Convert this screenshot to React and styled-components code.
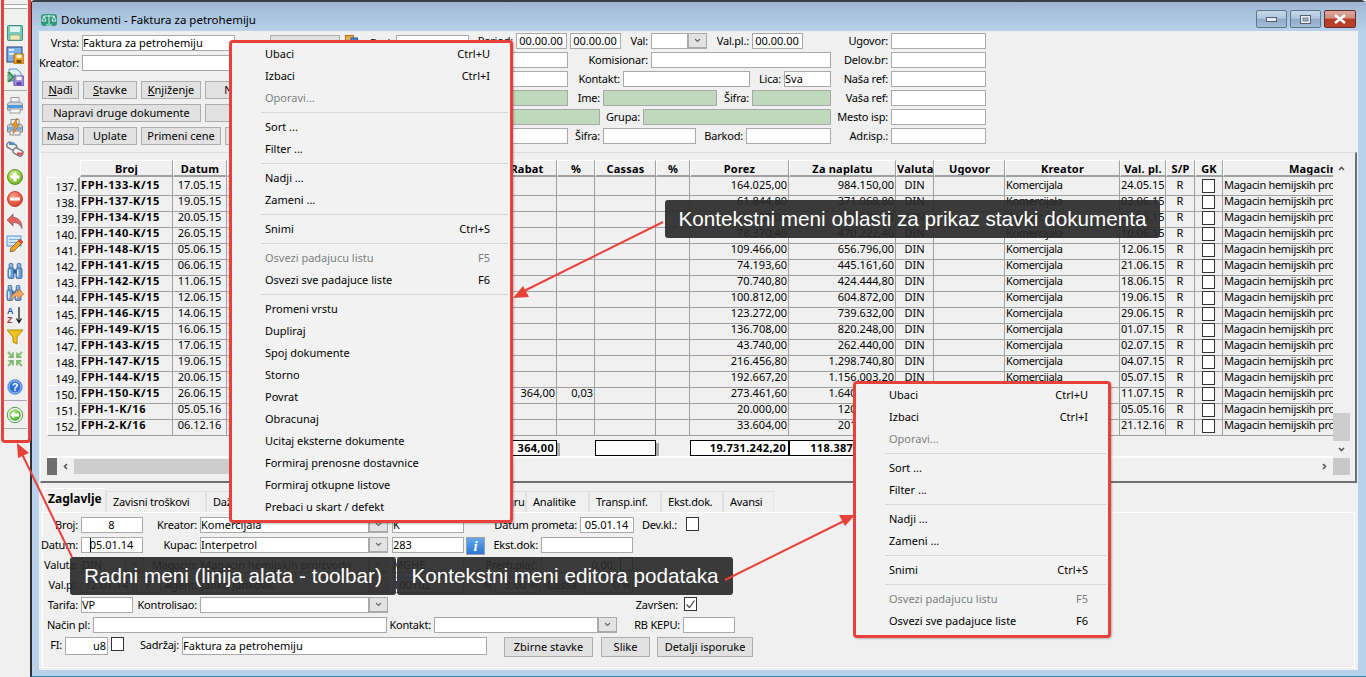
import React from 'react';
import styled, { createGlobalStyle } from 'styled-components';

const Global = createGlobalStyle`
  html, body { margin: 0; padding: 0; background: #f0f0f0; }
  body { font-family: "Noto Sans", "DejaVu Sans", sans-serif; font-size: 11px; color: #000; overflow: hidden; }
  * { box-sizing: border-box; }
`;

const Page = styled.div`
  position: relative; display: flex; width: 1366px; height: 677px; overflow: hidden; background: #f0f0f0;
`;

/* toolbar */
const Toolbar = styled.div`
  display: flex; flex-direction: column; align-items: center; width: 30px; flex: none; height: 443px; background: #f0f0f0;
`;
const Grip = styled.div`
  width: 24px; height: 5px; margin-top: 4px; margin-bottom: 13px; border-top: 1px solid #a9a9a9; border-bottom: 1px solid #a9a9a9; background: #fff;
`;
const ToolSep = styled.div`
  width: 23px; height: 1px; margin-top: 2px; margin-bottom: 3px; background: #a9a9a9;
`;
const ToolGroup = styled.div`
  display: flex; flex-direction: column; margin-top: ${p => p.$mt || 0}px;
`;
const ToolBtn = styled.div`
  display: flex; align-items: center; justify-content: center; width: 22px; height: 22px;
`;

const Svg = ({ children, s = 18, vb = 18 }) => <svg width={s} height={s} viewBox={`0 0 ${vb} ${vb}`}>{children}</svg>;

const Barrel = ({ x }) => (
  <g>
    <rect x={x + 1.2} y="1.5" width="3.600" height="5" rx="1" fill="#8fb6e0" stroke="#2e5a94" strokeWidth=".8"/>
    <rect x={x} y="6" width="6" height="10.500" rx="1.500" fill="#6d9bd2" stroke="#2e5a94" strokeWidth=".8"/>
    <rect x={x + 1} y="7.500" width="1.600" height="7" fill="#dbe9f8"/>
  </g>
);

const Icons = {
  save: <Svg><rect x="1.5" y="1.5" width="15" height="15" rx="1" fill="#7fc9b9" stroke="#3a8f84"/><rect x="4" y="2.500" width="10" height="5.500" fill="#e3f4ef"/><rect x="4" y="11" width="10" height="5" fill="#efe9b8" stroke="#7f9a70" strokeWidth=".6"/></Svg>,
  saveAs: <Svg><rect x="1" y="1" width="15" height="15" fill="#7fb2e8" stroke="#24406e"/><rect x="3" y="3" width="5" height="2" fill="#d7e8fb"/><rect x="3" y="7" width="5" height="2" fill="#d7e8fb"/><rect x="8" y="8" width="10" height="10" rx="1" fill="#f2a431" stroke="#a86a10"/><rect x="10.5" y="8.5" width="5" height="3.5" fill="#fff2c8"/><rect x="10.5" y="14" width="5" height="3" fill="#7a4c10"/></Svg>,
  saveXl: <Svg><path d="M3 1h8l4 4v8H3z" fill="#dff0fb" stroke="#5f93c4"/><path d="M1 4l5 5-5 5h3l4-5-4-5z" fill="#2f8a3f"/><path d="M1 6h9v7H1z" fill="#2f8a3f" opacity=".35"/><rect x="8" y="8" width="10" height="10" rx="1" fill="#a392dc" stroke="#5a4aa0"/><rect x="10.5" y="8.5" width="5" height="3.5" fill="#fff"/><rect x="10.5" y="14" width="5" height="3.2" fill="#5a4ca8"/></Svg>,
  print: <Svg><rect x="5" y="1.5" width="8" height="6" fill="#f6f6f6" stroke="#9d9d9d"/><path d="M1.5 8l2-2h11l2 2v6h-15z" fill="#cfd4da" stroke="#8a919c"/><rect x="2" y="9" width="14" height="3" fill="#4a98e0"/><rect x="4" y="13" width="10" height="4" fill="#f6f6f6" stroke="#9d9d9d"/></Svg>,
  printFast: <Svg><rect x="5" y="1.5" width="8" height="6" fill="#f0f0f0" stroke="#8d8d8d"/><path d="M1.5 8l2-2h11l2 2v6h-15z" fill="#c6ccd3" stroke="#7d8590"/><rect x="2" y="9" width="14" height="3" fill="#7aaee0"/><rect x="4" y="13" width="10" height="4" fill="#f3f3f3" stroke="#8d8d8d"/><path d="M11 0L6 8h3L7 16l6-9h-3z" fill="#f3a01e" stroke="#b4620a" strokeWidth=".6"/></Svg>,
  links: <Svg><g transform="rotate(28 5.500 5.500)"><rect x="1" y="3" width="10" height="6" rx="2.500" fill="#f3f3f3" stroke="#787878" strokeWidth="1.400"/></g><g transform="rotate(28 12 12)"><rect x="7" y="9" width="10" height="6" rx="2.500" fill="#f3f3f3" stroke="#787878" strokeWidth="1.400"/></g><rect x="3" y="2.500" width="5.500" height="2.500" fill="#4a8fd8"/><rect x="11" y="12.500" width="5.500" height="2.500" fill="#d9534f"/></Svg>,
  plus: <Svg><defs><radialGradient id="gp" cx=".4" cy=".3" r=".8"><stop offset="0" stopColor="#d8f08f"/><stop offset="1" stopColor="#5da80f"/></radialGradient></defs><circle cx="9" cy="9" r="7.5" fill="url(#gp)" stroke="#5a9a1e"/><path d="M4.5 7.5h3v-3h3v3h3v3h-3v3h-3v-3h-3z" fill="#fff"/></Svg>,
  minus: <Svg><defs><radialGradient id="gm" cx=".4" cy=".3" r=".8"><stop offset="0" stopColor="#fa9d8a"/><stop offset="1" stopColor="#d8321e"/></radialGradient></defs><circle cx="9" cy="9" r="7.5" fill="url(#gm)" stroke="#c6402c"/><rect x="4" y="7.5" width="10" height="3" fill="#fff"/></Svg>,
  undo: <Svg><path d="M1 8l6-6v3.5c6 0 9 4 9 11-2-4-4-6-9-6v3.500z" fill="#e2635c" stroke="#9c6a78"/></Svg>,
  edit: <Svg><rect x="1" y="2" width="14" height="10" fill="#d5e8fa" stroke="#5c96d0"/><rect x="3" y="5" width="10" height="1" fill="#7cb0e0"/><rect x="3" y="8" width="7" height="1" fill="#7cb0e0"/><path d="M14 5l3 3-9 9-4 1 1-4z" fill="#f5a623" stroke="#7a5320" strokeWidth=".8"/><path d="M14 5l3 3-2 2-3-3z" fill="#df4a3f"/></Svg>,
  find: <Svg><Barrel x={2} /><Barrel x={10} /><rect x="7.500" y="7.500" width="3" height="4" fill="#2e5a94"/></Svg>,
  replace: <Svg><Barrel x={1} /><Barrel x={9} /><rect x="6.500" y="7.500" width="3" height="3" fill="#2e5a94"/><path d="M5 17C5 10 9 8 12 8V5l6 5-6 5v-3c-3 0-5 1-7 5z" fill="#f2a65c" stroke="#c47a30" strokeWidth=".6"/></Svg>,
  sort: <Svg><text x="1" y="8" fontSize="9" fontWeight="700" fontFamily="Liberation Sans" fill="#2f55a4">A</text><text x="1" y="17" fontSize="9" fontWeight="700" fontFamily="Liberation Sans" fill="#a43b3b">Z</text><path d="M13 1v14M10.500 12.500l2.500 4 2.500-4" fill="none" stroke="#111" strokeWidth="1.200"/></Svg>,
  filter: <Svg><path d="M1 2h16l-6 7v7l-4-2V9z" fill="#f0c420" stroke="#b08a10"/></Svg>,
  collapse: <Svg><g fill="none" stroke="#7fbc72" strokeWidth="1.800"><path d="M2 2l4.500 4.500M7 2.500v4.500H2.500"/><path d="M16 2l-4.500 4.500M11 2.500v4.500h4.500"/><path d="M2 16l4.500-4.500M7 15.500v-4.500H2.500"/><path d="M16 16l-4.500-4.500M11 15.500v-4.500h4.500"/></g></Svg>,
  help: <Svg><circle cx="9" cy="9" r="7.500" fill="#2d6fd8" stroke="#9dbbe8"/><circle cx="9" cy="9" r="6" fill="#2d6fd8" stroke="#fff" strokeWidth=".6"/><text x="9" y="13" textAnchor="middle" fontSize="11" fontWeight="700" fontFamily="Liberation Sans" fill="#fff">?</text></Svg>,
  back: <Svg><defs><radialGradient id="gb" cx=".4" cy=".3" r=".8"><stop offset="0" stopColor="#b6ee80"/><stop offset="1" stopColor="#37a02a"/></radialGradient></defs><circle cx="9" cy="9" r="7.700" fill="#f4f4f4" stroke="#5b9a4b"/><circle cx="9" cy="9" r="5.800" fill="url(#gb)"/><path d="M4 9l4-3.500V7.500h5v3H8v2z" fill="#fff"/></Svg>,
};

/* window */
const Win = styled.div`
  flex: 1; display: flex; flex-direction: column; height: 677px; border-top: 2px solid #3a3f44; border-left: 2px solid #2c2f33; border-bottom: 1px solid #2b8aa5; background: #b9d1ea; border-top-right-radius: 5px; border-top-left-radius: 5px;
`;
const TitleBar = styled.div`
  display: flex; align-items: center; height: 29px; flex: none; padding: 0 10px 0 9px; background: linear-gradient(#9db7d3, #b9d1ea);
`;
const TitleText = styled.div`
  margin-left: 4px; font-size: 11.5px; flex: 1; margin-top: 6px;
`;
const TitleIcon = styled.div`
  width: 16px; height: 16px; margin-top: 6px; display: flex;
`;
const WinBtns = styled.div`
  display: flex; gap: 3px; margin-top: 5px;
`;
const WinBtn = styled.div`
  display: flex; align-items: center; justify-content: center; height: 18px; width: ${p => p.$w || 31}px; border: 1px solid ${p => p.$close ? '#6b2a2a' : '#5e7590'}; border-radius: 2px;
  background: ${p => p.$close ? 'linear-gradient(#dca79c 0%, #cf8b7e 45%, #b53a24 50%, #b9402a 100%)' : 'linear-gradient(#c8d8e9 0%, #afc6de 45%, #8eabc9 50%, #a3bcd7 100%)'};
`;
const Body = styled.div`
  flex: 1; margin: 0 8px 6px 7px; display: flex; flex-direction: column; background: #f0f0f0;
`;

const Row = styled.div`
  display: flex; align-items: flex-start; height: ${p => p.$h || 16}px; margin-top: ${p => p.$mt || 0}px; white-space: nowrap;
`;
const Cluster = styled.div`
  display: flex; align-items: flex-start; margin-top: ${p => p.$mt || 0}px;
`;
const Label = styled.div`
  flex: none; display: flex; justify-content: flex-end; width: ${p => p.$w}px; height: 16px; line-height: 16px; padding-right: ${p => p.$pr ?? 3}px; white-space: nowrap; letter-spacing: -.2px;
`;
const Field = styled.div`
  flex: none; width: ${p => p.$w}px; height: ${p => p.$h || 16}px; line-height: ${p => (p.$h || 16) - 2}px; margin-left: ${p => p.$ml || 0}px; padding: 0 1px 0 0; overflow: hidden; white-space: nowrap;
  border: 1px solid #a9a9a9; background: ${p => p.$green ? '#bfd9bd' : '#fff'}; text-align: ${p => p.$align || 'left'};
`;
const SelectBox = styled.div`
  flex: none; display: flex; width: ${p => p.$w}px; height: 16px; border: 1px solid #a9a9a9; background: #fff; margin-left: ${p => p.$ml || 0}px;
`;
const SelectText = styled.div`
  flex: 1; line-height: 14px; overflow: hidden; white-space: nowrap;
`;
const SelectBtn = styled.div`
  flex: none; width: 19px; display: flex; align-items: center; justify-content: center; background: #e3e3e3; border-left: 2px solid #a9a9a9; border-bottom: 1px solid #a9a9a9;
`;
const Check = styled.div`
  flex: none; display: flex; align-items: center; justify-content: center; width: 13px; height: 14px; margin-left: ${p => p.$ml || 0}px; border: 1px solid #333; background: ${p => p.$bg || '#fff'};
`;
const Button = styled.div`
  flex: none; width: ${p => p.$w}px; height: ${p => p.$h || 18}px; line-height: ${p => (p.$h || 18) - 2}px; margin-left: ${p => p.$ml || 0}px; text-align: center; white-space: nowrap; overflow: hidden;
  background: #e1e1e1; border: 1px solid #adadad;
`;
const U = styled.span`text-decoration: underline;`;
const Chevron = ({ d = 'down', c = '#666', s = 9, w = 1.1 }) => {
  const p = { down: 'M2 3l2.500 2.500L7 3', up: 'M2 6l2.500-2.500L7 6', left: 'M6 2L3.500 4.500 6 7', right: 'M3 2l2.500 2.500L3 7' }[d];
  return <svg width={s} height={s} viewBox="0 0 9 9"><path d={p} fill="none" stroke={c} strokeWidth={w} /></svg>;
};
const Select = ({ w, text, ml }) => (
  <SelectBox $w={w} $ml={ml}><SelectText>{text}</SelectText><SelectBtn><Chevron /></SelectBtn></SelectBox>
);

const Header = styled.div`
  flex: none; height: 121px; padding-top: 2px; display: flex; flex-direction: column;
`;
const Split = styled.div`display: flex; flex: 1;`;
const LeftCol = styled.div`
  flex: none; width: 473px; display: flex; flex-direction: column;
`;
const BtnRow = styled.div`
  display: flex; gap: 4px; padding-left: 3px; margin-top: ${p => p.$mt}px; height: 18px; overflow: hidden;
`;
const RightCol = styled.div`
  display: flex; flex-direction: column; gap: 3px; padding-top: 3px;
`;

/* grid */
const Cols = '33px 93px 54px 270px 60px 38px 61px 34px 99px 107px 38px 71px 115px 46px 29px 28px 180px';
const GridPanel = styled.div`
  flex: none; height: 331px; margin: 0 1px; padding: 7px 0 0 6px; border-top: 1px solid #dcdcdc; border-left: 1px solid #fff; border-right: 2px solid #6f6f6f; border-bottom: 2px solid #6f6f6f;
`;
const GridWrap = styled.div`display: flex; height: 298px;`;
const TableArea = styled.div`
  width: 1286px; flex: none; overflow: hidden; border-bottom: 2px solid #fff;
`;
const GridRow = styled.div`
  display: grid; grid-template-columns: ${Cols}; height: ${p => p.$h || 16}px; width: 1400px; margin-top: ${p => p.$mt || 0}px;
`;
const Head = styled.div`
  text-align: center; font-weight: 700; line-height: 16px; font-size: 11px; letter-spacing: .2px; white-space: nowrap; overflow: hidden;
  background: #f0f0f0; border-top: 1px solid #fff; border-left: 1px solid #fff; border-right: 1px solid #a0a0a0; border-bottom: 2px solid #a0a0a0;
`;
const HeadBlank = styled.div``;
const Gutter = styled.div`
  text-align: right; padding-right: 1px; line-height: 17px; background: #f0f0f0; border-top: 1px solid #fff; border-left: 1px solid #fff; border-bottom: 1px solid #a0a0a0; border-right: 2px solid #8c8c8c;
`;
const Cell = styled.div`
  line-height: 15px; padding: 0 1px; white-space: nowrap; overflow: hidden; letter-spacing: ${p => p.$ls || 0}px;
  text-align: ${p => p.$align || 'left'}; font-weight: ${p => p.$bold ? 700 : 400};
  border-right: 1px solid #a0a0a0; border-bottom: 1px solid #a0a0a0;
`;
const CheckCell = styled(Cell)`display: flex; align-items: center; justify-content: center;`;
const TotalBlank = styled.div``;
const TotalBox = styled.div`
  height: 16px; line-height: 14px; font-weight: 700; text-align: right; padding-right: 2px; background: #fff; border: 1px solid #000; box-shadow: 3px 3px 0 #a9a9a9; letter-spacing: .3px; white-space: nowrap; overflow: hidden;
`;
const VScroll = styled.div`
  width: 17px; flex: none; display: flex; flex-direction: column;
`;
const ArrowBtn = styled.div`
  flex: none; width: 17px; height: 17px; display: flex; align-items: center; justify-content: center;
`;
const VThumb = styled.div`flex: none; height: 28px; background: #cdcdcd; margin-top: auto;`;
const HScroll = styled.div`display: flex; height: 17px; width: 1303px;`;
const DarkEnd = styled.div`flex: none; width: 10px; background: #6e6e6e;`;
const HTrack = styled.div`flex: 1; display: flex; align-items: stretch; padding: 1px 0;`;
const HThumb = styled.div`width: 320px; background: #cdcdcd;`;
const Corner = styled.div`flex: none; width: 17px; background: #c8c8c8;`;

/* tabs */
const TabStrip = styled.div`
  flex: none; display: flex; align-items: flex-end; height: 25px; margin: 4px 0 0 4px;
`;
const Tab = styled.div`
  flex: none; width: ${p => p.$w}px; padding-left: ${p => p.$active ? 4 : 6}px; white-space: nowrap; overflow: hidden; letter-spacing: ${p => p.$active ? 0 : -.2}px;
  height: ${p => p.$active ? 24 : 21}px; line-height: 20px; font-weight: ${p => p.$active ? 700 : 400}; font-size: ${p => p.$active ? 12 : 11}px;
  border: 1px solid #e4e4e4; border-bottom: none; border-top-color: ${p => p.$active ? '#fff' : '#dedede'}; border-left-color: ${p => p.$active ? '#fff' : '#dedede'};
`;
const TabPanel = styled.div`
  flex: none; height: 156px; margin: 0 3px; padding: 4px 0 0 0; display: flex; flex-direction: column; gap: 4px; border: 1px solid #fff;
`;
const InfoBtn = styled.div`
  flex: none; width: 19px; height: 18px; margin-left: 2px; display: flex; align-items: center; justify-content: center;
  border: 1px solid #a0a0a0; background: linear-gradient(#62a9ec, #2b75d6);
  font: italic 700 15px "Liberation Serif", serif; color: #fff;
`;
const Caret = styled.span`border-left: 1px solid #000; margin-right: -1px;`;

/* overlays */
const Menu = styled.div`
  position: absolute; left: ${p => p.$x}px; top: ${p => p.$y}px; width: ${p => p.$w}px; height: ${p => p.$h}px; padding: 0 0 0 33px;
  background: #f2f2f2; border: 3px solid #e8413a; border-radius: 4px; box-shadow: 1px 1px 2px rgba(0,0,0,.25); color: #000;
`;
const MenuItem = styled.div`
  display: flex; justify-content: space-between; height: 22px; line-height: 22px; padding: 0 20px 0 0; color: ${p => p.$off ? '#7e7e7e' : '#000'}; white-space: nowrap;
`;
const MenuSep = styled.div`
  height: 1px; margin: 3px 2px 3px -4px; background: #d6d6d6;
`;
const Callout = styled.div`
  position: absolute; left: ${p => p.$x}px; top: ${p => p.$y}px; width: ${p => p.$w}px; height: 38px; border-radius: 3px; background: rgba(42,42,42,.92); color: #fff; text-align: center;
  font: 20.7px/37px "Liberation Sans", sans-serif; white-space: nowrap;
`;
const Outline = styled.div`
  position: absolute; left: 1px; top: -3px; width: 30px; height: 446px; border: 3px solid #e8413a; border-radius: 4px; pointer-events: none;
`;
const Arrows = styled.svg`
  position: absolute; left: 0; top: 0; pointer-events: none;
`;

const rows = [
  ['137.','FPH-133-K/15','17.05.15','164.025,00','984.150,00','24.05.15'],
  ['138.','FPH-137-K/15','19.05.15','61.844,80','371.068,80','03.06.15'],
  ['139.','FPH-134-K/15','20.05.15','113.100,00','678.600,00','04.06.15'],
  ['140.','FPH-140-K/15','26.05.15','78.370,40','470.222,40','10.06.15'],
  ['141.','FPH-148-K/15','05.06.15','109.466,00','656.796,00','12.06.15'],
  ['142.','FPH-141-K/15','06.06.15','74.193,60','445.161,60','21.06.15'],
  ['143.','FPH-142-K/15','11.06.15','70.740,80','424.444,80','18.06.15'],
  ['144.','FPH-145-K/15','12.06.15','100.812,00','604.872,00','19.06.15'],
  ['145.','FPH-146-K/15','14.06.15','123.272,00','739.632,00','29.06.15'],
  ['146.','FPH-149-K/15','16.06.15','136.708,00','820.248,00','01.07.15'],
  ['147.','FPH-143-K/15','17.06.15','43.740,00','262.440,00','02.07.15'],
  ['148.','FPH-147-K/15','19.06.15','216.456,80','1.298.740,80','04.07.15'],
  ['149.','FPH-144-K/15','20.06.15','192.667,20','1.156.003,20','05.07.15'],
  ['150.','FPH-150-K/15','26.06.15','273.461,60','1.640.769,60','11.07.15','364,00','0,03'],
  ['151.','FPH-1-K/16','05.05.16','20.000,00','120.000,00','05.05.16'],
  ['152.','FPH-2-K/16','06.12.16','33.604,00','201.624,00','21.12.16'],
];
const heads = ['Broj','Datum','Kupac','Rabat','%','Cassas','%','Porez','Za naplatu','Valuta','Ugovor','Kreator','Val. pl.','S/P','GK','Magacin'];

const menuBase = [
  ['Ubaci','Ctrl+U'],['Izbaci','Ctrl+I'],['Oporavi...','',1],'-',
  ['Sort ...'],['Filter ...'],'-',
  ['Nadji ...'],['Zameni ...'],'-',
  ['Snimi','Ctrl+S'],'-',
  ['Osvezi padajucu listu','F5',1],['Osvezi sve padajuce liste','F6'],
];
const menuMore = ['-',['Promeni vrstu'],['Dupliraj'],['Spoj dokumente'],['Storno'],['Povrat'],['Obracunaj'],['Ucitaj eksterne dokumente'],['Formiraj prenosne dostavnice'],['Formiraj otkupne listove'],['Prebaci u skart / defekt']];

const ContextMenu = ({ items, ...rest }) => (
  <Menu {...rest}>
    {items.map((it, i) => it === '-' ? <MenuSep key={i} /> : (
      <MenuItem key={i} $off={it[2]}><span>{it[0]}</span><span>{it[1]}</span></MenuItem>
    ))}
  </Menu>
);

const Tool = ({ name }) => <ToolBtn>{Icons[name]}</ToolBtn>;
const tick = <svg width="11" height="11" viewBox="0 0 11 11"><path d="M1.500 5.500l3 3 5-7" fill="none" stroke="#444" strokeWidth="1.200"/></svg>;

export default function App() {
  return (
    <Page>
      <Global />
      <Toolbar>
        <Grip />
        <ToolGroup><Tool name="save" /><Tool name="saveAs" /><Tool name="saveXl" /></ToolGroup>
        <ToolSep />
        <ToolGroup><Tool name="print" /><Tool name="printFast" /><Tool name="links" /></ToolGroup>
        <ToolGroup $mt={6}><Tool name="plus" /><Tool name="minus" /><Tool name="undo" /><Tool name="edit" /></ToolGroup>
        <ToolGroup $mt={6}><Tool name="find" /><Tool name="replace" /><Tool name="sort" /><Tool name="filter" /><Tool name="collapse" /></ToolGroup>
        <ToolGroup $mt={6}><Tool name="help" /></ToolGroup>
        <ToolSep />
        <ToolGroup><Tool name="back" /></ToolGroup>
        <ToolSep />
      </Toolbar>

      <Win>
        <TitleBar>
          <TitleIcon>
            <svg width="16" height="16" viewBox="0 0 16 16"><rect x="0" y="2" width="16" height="12" rx="3" fill="#2f9a7e"/><path d="M8 3v9M3 4h10M3 4L1 9h4zM13 4l-2 5h4zM5 13h6" fill="none" stroke="#fff" strokeWidth=".8"/></svg>
          </TitleIcon>
          <TitleText>Dokumenti - Faktura za petrohemiju</TitleText>
          <WinBtns>
            <WinBtn><svg width="11" height="5" viewBox="0 0 11 5"><rect x=".5" y=".5" width="10" height="4" fill="#e8eef5" stroke="#56606c"/></svg></WinBtn>
            <WinBtn><svg width="11" height="9" viewBox="0 0 11 9"><rect x=".5" y=".5" width="10" height="8" fill="#e8eef5" stroke="#56606c"/><rect x="3" y="3" width="5" height="3" fill="#9fb6cf" stroke="#56606c" strokeWidth=".7"/></svg></WinBtn>
            <WinBtn $close $w={32}><svg width="14" height="10" viewBox="0 0 14 10"><path d="M2 1l10 8M12 1L2 9" stroke="#fff" strokeWidth="2.600"/></svg></WinBtn>
          </WinBtns>
        </TitleBar>
        <Body>
          <Header>
            <Row>
              <Cluster $mt={2}>
                <Label $w={43}>Vrsta:</Label>
                <Field $w={153}>Faktura za petrohemiju</Field>
                <Button $w={70} $ml={35}>Promeni</Button>
                <svg width="13" height="13" viewBox="0 0 13 13" style={{ marginLeft: 5 }}><rect x=".5" y=".5" width="8" height="10" fill="#f4a94a" stroke="#b87016"/><rect x="6" y="3" width="6.500" height="8" fill="#4b86d6" stroke="#2a5aa0"/></svg>
                <Label $w={38}>Broj:</Label>
                <Field $w={73} />
              </Cluster>
              <Label $w={47}>Period:</Label>
              <Field $w={51} $align="center">00.00.00</Field>
              <Field $w={51} $ml={3} $align="center">00.00.00</Field>
              <Label $w={30}>Val:</Label>
              <Select w={56} />
              <Label $w={45}>Val.pl.:</Label>
              <Field $w={51} $align="center">00.00.00</Field>
              <Label $w={88}>Ugovor:</Label>
              <Field $w={95} />
            </Row>
            <Split>
              <LeftCol>
                <Cluster $mt={6}>
                  <Label $w={43}>Kreator:</Label>
                  <Field $w={430} />
                </Cluster>
                <BtnRow $mt={10}>
                  <Button $w={37}><U>N</U>ađi</Button>
                  <Button $w={54}><U>S</U>tavke</Button>
                  <Button $w={60}><U>K</U>njiženje</Button>
                  <Button $w={90}>Nalepnice</Button>
                </BtnRow>
                <BtnRow $mt={5}>
                  <Button $w={159}>Napravi druge dokumente</Button>
                  <Button $w={90}>U dalje</Button>
                </BtnRow>
                <BtnRow $mt={5}>
                  <Button $w={37}>Masa</Button>
                  <Button $w={54}>Uplate</Button>
                  <Button $w={80}>Primeni cene</Button>
                  <Button $w={90}>Cene</Button>
                </BtnRow>
              </LeftCol>
              <RightCol>
                <Row>
                  <Field $w={56} />
                  <Label $w={83}>Komisionar:</Label>
                  <Field $w={180} />
                  <Label $w={60}>Delov.br:</Label>
                  <Field $w={95} />
                </Row>
                <Row>
                  <Field $w={56} />
                  <Label $w={55}>Kontakt:</Label>
                  <Field $w={127} />
                  <Label $w={34}>Lica:</Label>
                  <Field $w={47}>Sva</Field>
                  <Label $w={60}>Naša ref:</Label>
                  <Field $w={95} />
                </Row>
                <Row>
                  <Field $w={56} $green />
                  <Label $w={35}>Ime:</Label>
                  <Field $w={114} $green />
                  <Label $w={35}>Šifra:</Label>
                  <Field $w={79} $green />
                  <Label $w={60}>Vaša ref:</Label>
                  <Field $w={95} />
                </Row>
                <Row>
                  <Field $w={88} $green />
                  <Label $w={43}>Grupa:</Label>
                  <Field $w={188} $green />
                  <Label $w={60}>Mesto isp:</Label>
                  <Field $w={95} />
                </Row>
                <Row>
                  <Field $w={56} />
                  <Label $w={35}>Šifra:</Label>
                  <Field $w={93} />
                  <Label $w={50}>Barkod:</Label>
                  <Field $w={85} />
                  <Label $w={60}>Adr.isp.:</Label>
                  <Field $w={95} />
                </Row>
              </RightCol>
            </Split>
          </Header>

          <GridPanel>
            <GridWrap>
              <TableArea>
                <GridRow $h={17}>
                  <HeadBlank />
                  {heads.map((h, i) => <Head key={i}>{h}</Head>)}
                </GridRow>
                {rows.map((r) => (
                  <GridRow key={r[0]}>
                    <Gutter>{r[0]}</Gutter>
                    <Cell $bold $ls={0.6}>{r[1]}</Cell>
                    <Cell $align="center">{r[2]}</Cell>
                    <Cell>Interpetrol</Cell>
                    <Cell $align="right">{r[6] || ''}</Cell>
                    <Cell $align="right">{r[7] || ''}</Cell>
                    <Cell />
                    <Cell />
                    <Cell $align="right">{r[3]}</Cell>
                    <Cell $align="right">{r[4]}</Cell>
                    <Cell $align="center">DIN</Cell>
                    <Cell />
                    <Cell $ls={-0.35}>Komercijala</Cell>
                    <Cell $align="center">{r[5]}</Cell>
                    <Cell $align="center">R</Cell>
                    <CheckCell><Check /></CheckCell>
                    <Cell $ls={-0.3}>Magacin hemijskih proizvoda</Cell>
                  </GridRow>
                ))}
                <GridRow $mt={7}>
                  <TotalBlank /><TotalBlank /><TotalBlank /><TotalBlank />
                  <TotalBox>364,00</TotalBox>
                  <TotalBlank />
                  <TotalBox />
                  <TotalBlank />
                  <TotalBox>19.731.242,20</TotalBox>
                  <TotalBox>118.387.453,20</TotalBox>
                </GridRow>
              </TableArea>
              <VScroll>
                <ArrowBtn><Chevron d="up" c="#555" w={1.6} /></ArrowBtn>
                <VThumb />
                <ArrowBtn><Chevron d="down" c="#555" w={1.6} /></ArrowBtn>
              </VScroll>
            </GridWrap>
            <HScroll>
              <DarkEnd />
              <ArrowBtn><Chevron d="left" c="#555" w={1.6} /></ArrowBtn>
              <HTrack><HThumb /></HTrack>
              <ArrowBtn><Chevron d="right" c="#555" w={1.6} /></ArrowBtn>
              <Corner />
            </HScroll>
          </GridPanel>

          <TabStrip>
            <Tab $active $w={63}>Zaglavlje</Tab>
            <Tab $w={100}>Zavisni troškovi</Tab>
            <Tab $w={80}>Dažbine</Tab>
            <Tab $w={80}>Napomena</Tab>
            <Tab $w={80}>Reference</Tab>
            <Tab $w={80}>Otpremna grup</Tab>
            <Tab $w={63}>Analitike</Tab>
            <Tab $w={72}>Transp.inf.</Tab>
            <Tab $w={62}>Ekst.dok.</Tab>
            <Tab $w={51}>Avansi</Tab>
          </TabStrip>
          <TabPanel>
            <Row>
              <Label $w={38}>Broj:</Label>
              <Field $w={62} $align="center">8</Field>
              <Label $w={57}>Kreator:</Label>
              <Select w={188} text="Komercijala" />
              <Field $w={72} $ml={4}>K</Field>
              <Label $w={116}>Datum prometa:</Label>
              <Field $w={54} $align="center">05.01.14</Field>
              <Label $w={52} $pr={9}>Dev.kl.:</Label>
              <Check />
            </Row>
            <Row>
              <Label $w={38}>Datum:</Label>
              <Field $w={62} $align="center"><Caret />05.01.14</Field>
              <Label $w={57}>Kupac:</Label>
              <Select w={188} text="Interpetrol" />
              <Field $w={72} $ml={4}>283</Field>
              <InfoBtn>i</InfoBtn>
              <Label $w={56}>Ekst.dok:</Label>
              <Field $w={92} />
            </Row>
            <Row>
              <Label $w={38}>Valuta:</Label>
              <Select w={63} text="DIN" />
              <Label $w={56}>Magacin:</Label>
              <Select w={188} text="Magacin hemijskih proizvoda" />
              <Field $w={72} $ml={4}>MGHE</Field>
              <Label $w={77}>Preth.plać:</Label>
              <Field $w={74} $align="right">0,00</Field>
              <Check $ml={5} />
            </Row>
            <Row>
              <Label $w={38}>Val.pl:</Label>
              <Field $w={52} $align="center">12.01.14</Field>
              <Field $w={25} $ml={3} $align="center">7</Field>
              <Label $w={39}>Agent:</Label>
              <Select w={188} text="Janko Janković" />
              <Field $w={72} $ml={4}>100102</Field>
              <Label $w={31}>%</Label>
              <Field $w={45} $align="right">3,00 %</Field>
              <Button $w={37} $h={16} $ml={5}>Cassa:</Button>
              <Field $w={49} $ml={2} $align="right">0 %</Field>
            </Row>
            <Row>
              <Label $w={38}>Tarifa:</Label>
              <Field $w={52}>VP</Field>
              <Label $w={67}>Kontrolisao:</Label>
              <Select w={188} />
              <Label $w={296} $pr={6}>Završen:</Label>
              <Check>{tick}</Check>
            </Row>
            <Row>
              <Label $w={50}>Način pl:</Label>
              <Field $w={294} />
              <Label $w={47}>Kontakt:</Label>
              <Select w={183} />
              <Label $w={66}>RB KEPU:</Label>
              <Field $w={52} />
            </Row>
            <Row $h={20}>
              <Label $w={22}>FI:</Label>
              <Field $w={43} $h={18} $align="right">u8</Field>
              <Check $ml={3} />
              <Label $w={58}>Sadržaj:</Label>
              <Field $w={305} $h={18}>Faktura za petrohemiju</Field>
              <Button $w={89} $h={20} $ml={17}>Zbirne stavke</Button>
              <Button $w={49} $h={20} $ml={8}>Slike</Button>
              <Button $w={96} $h={20} $ml={7}>Detalji isporuke</Button>
            </Row>
          </TabPanel>
        </Body>
      </Win>

      <ContextMenu $x={229} $y={40} $w={284} $h={483} items={[...menuBase, ...menuMore]} />
      <ContextMenu $x={853} $y={381} $w={258} $h={257} items={menuBase} />
      <Callout $x={665} $y={200} $w={495}>Kontekstni meni oblasti za prikaz stavki dokumenta</Callout>
      <Callout $x={70} $y={557} $w={326}>Radni meni (linija alata - toolbar)</Callout>
      <Callout $x={397} $y={557} $w={336}>Kontekstni meni editora podataka</Callout>
      <Outline />
      <Arrows width="1366" height="677" viewBox="0 0 1366 677">
        <g stroke="#e8413a" strokeWidth="2" fill="#e8413a">
          <path d="M663 222L522 292" />
          <path d="M513 298l16-1-6-11z" stroke="none" />
          <path d="M72 557L22 454" />
          <path d="M17 443l1 15 11-5z" stroke="none" />
          <path d="M725 580L846 520" />
          <path d="M855 515l-16 0 6 11z" stroke="none" />
        </g>
      </Arrows>
    </Page>
  );
}
